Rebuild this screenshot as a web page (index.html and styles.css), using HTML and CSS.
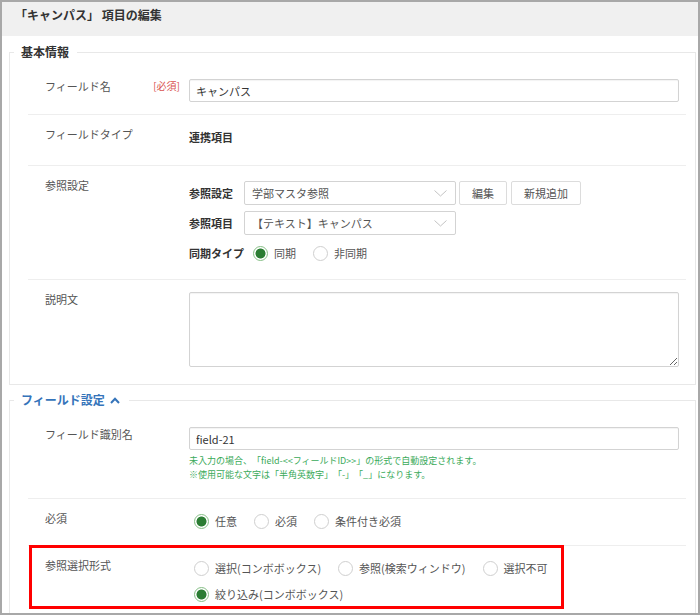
FILE: index.html
```html
<!DOCTYPE html>
<html lang="ja">
<head>
    <meta charset="UTF-8">
    <title>項目の編集</title>
    <link rel="stylesheet" href="styles.css">
</head>
<body>
    <div class="dialog">
        <div class="dialog-header">「キャンパス」 項目の編集</div>

        <!-- 基本情報 -->
        <fieldset class="group">
            <legend>基本情報</legend>

            <div class="row">
                <div class="label">フィールド名 <span class="req">[必須]</span></div>
                <div class="value"><input class="text" type="text" value="キャンパス"></div>
            </div>

            <div class="row">
                <div class="label">フィールドタイプ</div>
                <div class="value"><div class="static">連携項目</div></div>
            </div>

            <div class="row">
                <div class="label">参照設定</div>
                <div class="value sub-rows">
                    <div class="sub-row">
                        <span class="sub-label">参照設定</span>
                        <div class="select">
                            <span>学部マスタ参照</span>
                            <svg width="13" height="7" viewBox="0 0 13 7"><polyline points="0.5,0.5 6.5,6 12.5,0.5" fill="none" stroke="#c4c4c4" stroke-width="1"/></svg>
                        </div>
                        <button class="btn">編集</button>
                        <button class="btn">新規追加</button>
                    </div>
                    <div class="sub-row">
                        <span class="sub-label">参照項目</span>
                        <div class="select">
                            <span>【テキスト】キャンパス</span>
                            <svg width="13" height="7" viewBox="0 0 13 7"><polyline points="0.5,0.5 6.5,6 12.5,0.5" fill="none" stroke="#c4c4c4" stroke-width="1"/></svg>
                        </div>
                    </div>
                    <div class="sub-row">
                        <span class="sub-label tight">同期タイプ</span>
                        <label class="opt"><input type="radio" name="sync" checked>同期</label>
                        <label class="opt"><input type="radio" name="sync">非同期</label>
                    </div>
                </div>
            </div>

            <div class="row">
                <div class="label">説明文</div>
                <div class="value"><textarea class="memo"></textarea></div>
            </div>
        </fieldset>

        <!-- フィールド設定 -->
        <fieldset class="group second">
            <legend class="toggle">フィールド設定<svg class="caret" width="10" height="7" viewBox="0 0 10 7"><polyline points="1,6 5,1.8 9,6" fill="none" stroke="#3574ba" stroke-width="2"/></svg></legend>

            <div class="row">
                <div class="label">フィールド識別名</div>
                <div class="value">
                    <input class="text" type="text" value="field-21">
                    <div class="help">
                        未入力の場合、「field-&lt;&lt;フィールドID&gt;&gt;」の形式で自動設定されます。<br>
                        ※使用可能な文字は「半角英数字」「-」「_」になります。
                    </div>
                </div>
            </div>

            <div class="row">
                <div class="label">必須</div>
                <div class="value">
                    <div class="opts">
                        <label class="opt"><input type="radio" name="req" checked>任意</label>
                        <label class="opt"><input type="radio" name="req">必須</label>
                        <label class="opt"><input type="radio" name="req">条件付き必須</label>
                    </div>
                </div>
            </div>

            <div class="row marked">
                <div class="label">参照選択形式</div>
                <div class="value">
                    <div class="opts">
                        <label class="opt"><input type="radio" name="mode">選択(コンボボックス)</label>
                        <label class="opt"><input type="radio" name="mode">参照(検索ウィンドウ)</label>
                        <label class="opt"><input type="radio" name="mode">選択不可</label>
                    </div>
                    <div class="opts">
                        <label class="opt"><input type="radio" name="mode" checked>絞り込み(コンボボックス)</label>
                    </div>
                </div>
                <div class="mark"></div>
            </div>
        </fieldset>
    </div>
</body>
</html>
```

FILE: styles.css
```css
/* Base */
body {
    margin: 0;
    font-family: "Noto Sans CJK JP", "Noto Sans", sans-serif;
    font-size: 11px;
    color: #333;
    background: #fff;
    text-spacing-trim: space-all;
}

/* Dialog frame */
.dialog {
    width: 700px;
    height: 615px;
    box-sizing: border-box;
    border: 2px solid #a8a8a8;
    overflow: hidden;
    background: #fff;
}

.dialog-header {
    height: 34px;
    box-sizing: border-box;
    padding: 4px 0 0 13px;
    background: #f0f0f0;
    font-size: 12px;
    font-weight: bold;
    line-height: 18px;
    color: #333;
}

/* Groups */
.group {
    margin: 7px 2px 0 7px;
    padding: 6px 0 5px 4px;
    border: 1px solid #e8e8e8;
    min-width: 0;
}

.group.second {
    margin-top: 6px;
}

.group legend {
    padding: 0 8px 0 7px;
    font-size: 12px;
    font-weight: bold;
    line-height: 18px;
    color: #333;
}

.group legend.toggle {
    padding-right: 9px;
    color: #3574ba;
}

.caret {
    margin-left: 5px;
    vertical-align: 1px;
}

/* Rows */
.row {
    position: relative;
    display: flex;
    margin: 0 9px 0 14px;
    padding: 12px 7px 12px 17px;
}

.row + .row {
    border-top: 1px solid #eeeeee;
}

.label {
    flex: none;
    width: 144px;
    box-sizing: border-box;
    padding-right: 9px;
    display: flex;
    justify-content: space-between;
    line-height: 14px;
    color: #555;
}

.req {
    font-size: 10px;
    color: #d9534f;
}

.value {
    flex: 1;
    min-width: 0;
}

.static {
    font-weight: bold;
    line-height: 20px;
    padding-bottom: 6px;
}

/* Controls */
.text {
    display: block;
    width: 100%;
    height: 23px;
    box-sizing: border-box;
    margin: 0;
    padding: 0 6px;
    border: 1px solid #d3d3d3;
    border-radius: 2px;
    box-shadow: inset 0 1px 1px rgba(0, 0, 0, 0.05);
    font-family: inherit;
    font-size: 11px;
    color: #333;
}

.memo {
    display: block;
    width: 100%;
    height: 75px;
    box-sizing: border-box;
    margin: 0;
    border: 1px solid #d3d3d3;
    border-radius: 2px;
    box-shadow: inset 0 1px 1px rgba(0, 0, 0, 0.05);
    font-family: inherit;
}

.sub-rows {
    display: flex;
    flex-direction: column;
    gap: 6px;
    margin: 3px 0 2px;
}

.sub-row {
    display: flex;
    align-items: center;
    height: 24px;
}

.sub-label {
    font-weight: bold;
    margin-right: 11px;
}

.sub-label.tight {
    margin-right: 4px;
}

.select {
    display: flex;
    align-items: center;
    justify-content: space-between;
    width: 212px;
    height: 24px;
    box-sizing: border-box;
    padding: 0 8px 0 7px;
    border: 1px solid #d3d3d3;
    border-radius: 2px;
    color: #555;
}

.btn {
    height: 24px;
    margin-left: 3px;
    padding: 0 12px;
    border: 1px solid #dcdcdc;
    border-radius: 2px;
    background: #fff;
    font-family: inherit;
    font-size: 11px;
    color: #555;
}

.btn + .btn {
    margin-left: 4px;
}

/* Radios */
.opts {
    display: flex;
    align-items: center;
    height: 20px;
}

.row .value > .opts:only-child {
    padding-bottom: 2px;
}

.opts + .opts {
    margin-top: 6px;
}

.opt {
    display: flex;
    align-items: center;
    margin-right: 12px;
    color: #555;
    line-height: 20px;
}

.opt input {
    appearance: none;
    width: 15px;
    height: 15px;
    margin: 0 6px 0 5px;
    border: 1px solid #cfcfcf;
    border-radius: 50%;
    background: #fff;
}

.opt input:checked {
    border-color: #86bf86;
    background: radial-gradient(circle, #2b7d33 0, #2b7d33 4.6px, #fff 5.4px);
}

/* Help text */
.help {
    margin-top: 4px;
    padding-bottom: 4px;
    font-size: 9px;
    line-height: 14px;
    color: #3aaa5a;
}

/* Highlight frame */
.mark {
    position: absolute;
    top: -1px;
    left: 1px;
    width: 535px;
    height: 64px;
    box-sizing: border-box;
    border: 3px solid #ff0000;
}
```
